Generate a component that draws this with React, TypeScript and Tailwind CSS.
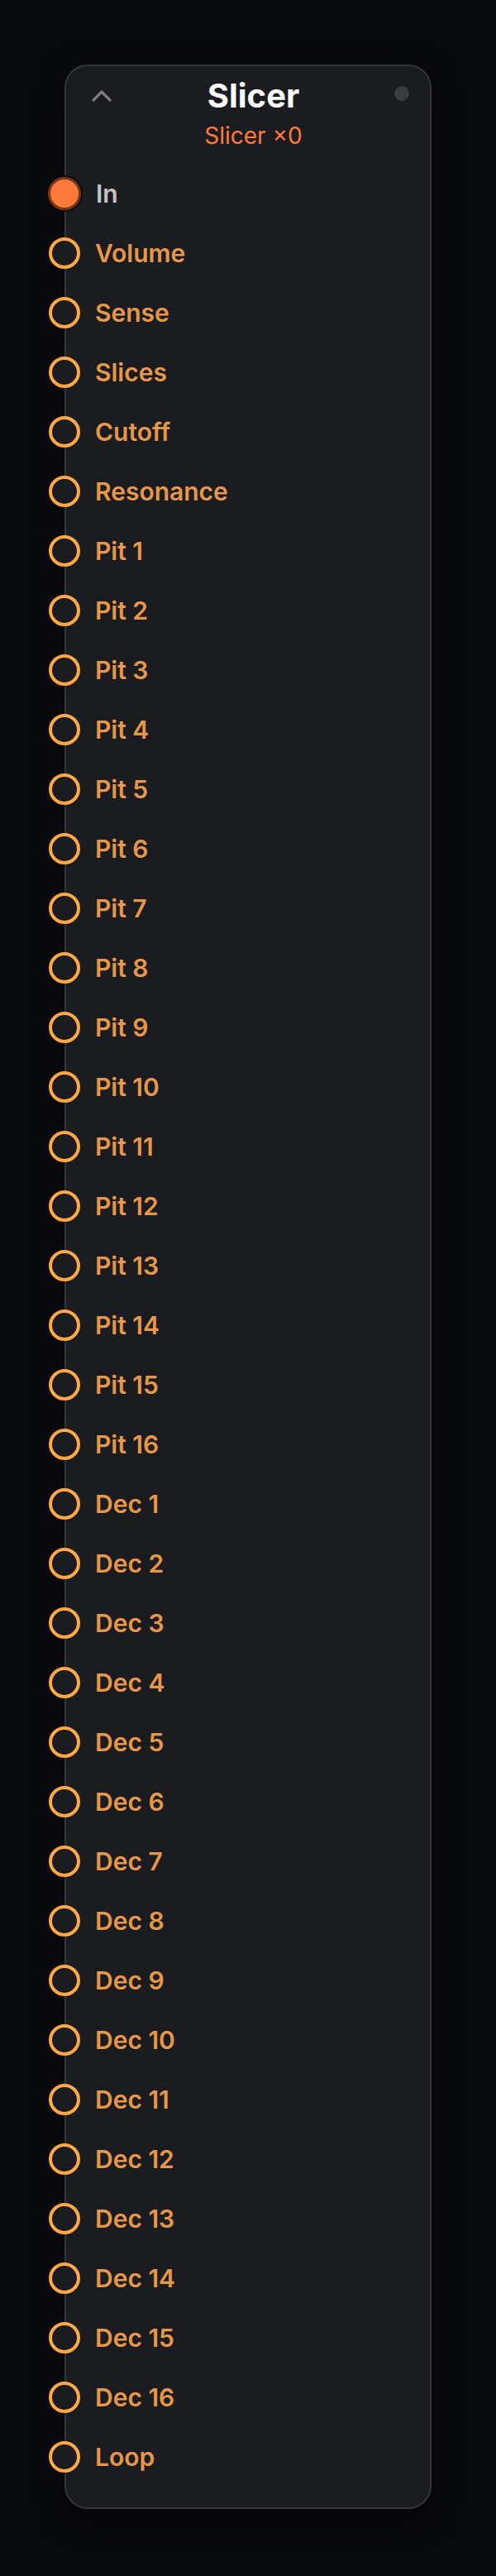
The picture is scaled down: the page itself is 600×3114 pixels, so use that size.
const ports: string[] = [
  "Volume",
  "Sense",
  "Slices",
  "Cutoff",
  "Resonance",
  ...Array.from({ length: 16 }, (_, i) => `Pit ${i + 1}`),
  ...Array.from({ length: 16 }, (_, i) => `Dec ${i + 1}`),
  "Loop",
];

function Port({ label, connected }: { label: string; connected?: boolean }) {
  return (
    <div className="flex h-[72px] items-center gap-[18px]">
      {connected ? (
        <span className="-ml-[22px] h-[40px] w-[40px] shrink-0 rounded-full border-[3px] border-[#7a3518] bg-[#ff7a3a] shadow-[0_0_0_2px_#0c0c0e]" />
      ) : (
        <span className="-ml-[21px] h-[38px] w-[38px] shrink-0 rounded-full border-[4px] border-[#ffa845] bg-[#1b1c20]" />
      )}
      <span
        className={
          "text-[30px] font-semibold leading-none " +
          (connected ? "text-[#c4c4c8]" : "text-[#e6974a]")
        }
      >
        {label}
      </span>
    </div>
  );
}

export default function App() {
  return (
    <div
      className="min-h-[3114px] bg-[#0a0b0e] pt-[78px]"
      style={{ fontFamily: "Inter, 'Noto Sans', sans-serif" }}
    >
      <div className="mx-auto w-[444px] rounded-[28px] border-2 border-[#35363a] bg-[#1b1c20] shadow-[0_12px_40px_rgba(0,0,0,0.6)]">
        {/* header */}
        <div className="flex items-start px-[30px] pt-[13px] pb-[18px]">
          <svg
            width="26"
            height="16"
            viewBox="0 0 26 16"
            className="mt-[15px] shrink-0"
            fill="none"
            stroke="#7c7c80"
            strokeWidth="3.2"
            strokeLinecap="round"
            strokeLinejoin="round"
          >
            <path d="M3 13 L13 3 L23 13" />
          </svg>
          <div className="flex flex-1 flex-col items-center">
            <div className="text-[40px] font-bold leading-[46px] text-white">Slicer</div>
            <div className="mt-[9px] text-[28px] leading-[32px] text-[#ff7a3a]">Slicer ×0</div>
          </div>
          <span className="mt-[11px] mr-[-5px] h-[18px] w-[18px] shrink-0 rounded-full bg-[#3a3b40]" />
        </div>
        {/* ports */}
        <div className="pb-[25px]">
          <Port label="In" connected />
          {ports.map((p) => (
            <Port key={p} label={p} />
          ))}
        </div>
      </div>
    </div>
  );
}
